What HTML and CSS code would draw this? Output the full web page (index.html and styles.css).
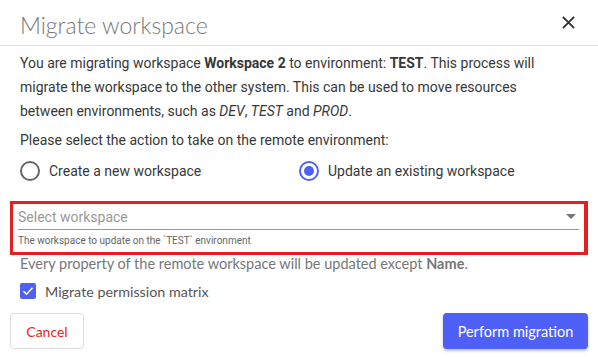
FILE: index.html
```html
<!DOCTYPE html>
<html lang="en">
<head>
  <meta charset="UTF-8">
  <title>Migrate workspace</title>
  <link rel="stylesheet" href="styles.css">
</head>
<body>

  <div class="dialog">
    <div class="dialog-header">
      <h2 class="dialog-title">Migrate workspace</h2>
      <svg class="close-icon" width="16" height="16" viewBox="0 0 16 16">
        <path d="M2 2 L14 14 M14 2 L2 14" stroke="#333" stroke-width="2" fill="none"/>
      </svg>
    </div>

    <div class="dialog-body">
      <p class="intro">You are migrating workspace <b>Workspace 2</b> to environment: <b>TEST</b>. This process will
        migrate the workspace to the other system. This can be used to move resources
        between environments, such as <i>DEV</i>, <i>TEST</i> and <i>PROD</i>.</p>

      <p class="question">Please select the action to take on the remote environment:</p>

      <div class="radio-row">
        <label class="radio">
          <span class="radio-circle"></span>
          Create a new workspace
        </label>
        <label class="radio">
          <span class="radio-circle checked"></span>
          Update an existing workspace
        </label>
      </div>

      <div class="select-box">
        <div class="select-field">
          <span class="placeholder">Select workspace</span>
          <span class="arrow"></span>
        </div>
        <div class="helper">The workspace to update on the `TEST` environment</div>
      </div>

      <p class="note">Every property of the remote workspace will be updated except <b>Name</b>.</p>

      <label class="check">
        <span class="check-box">
          <svg width="16" height="16" viewBox="0 0 16 16">
            <path d="M3.5 8.2 L6.6 11.2 L12.5 4.8" stroke="#fff" stroke-width="1.6" fill="none"/>
          </svg>
        </span>
        Migrate permission matrix
      </label>
    </div>

    <div class="dialog-footer">
      <button class="btn-cancel">Cancel</button>
      <button class="btn-primary">Perform migration</button>
    </div>
  </div>

</body>
</html>
```

FILE: styles.css
```css
html {
  font-family: 'Roboto', sans-serif;
}

body {
  margin: 0;
  background-color: #fff;
}

.dialog {
  width: 598px;
  height: 357px;
  color: #333;
}

.dialog-header {
  height: 45px;
  border-bottom: 1px solid #ddd;
  display: flex;
  align-items: center;
  justify-content: space-between;
  padding: 0 22px 0 20px;
}

.dialog-title {
  margin: 0;
  font-family: 'Lato', sans-serif;
  font-weight: 300;
  font-size: 23px;
  color: #777;
  padding-top: 4px;
}

.close-icon {
  width: 15px;
  height: 15px;
}

.dialog-body {
  padding: 0 20px;
}

.intro {
  margin: 5px 0 0;
  max-width: 540px;
  font-size: 14px;
  line-height: 24px;
  color: #383838;
}

.question {
  margin: 5px 0 0;
  font-size: 14px;
  line-height: 24px;
  color: #383838;
}

.radio-row {
  display: flex;
  margin-top: 7px;
  height: 24px;
}

.radio {
  display: flex;
  align-items: center;
  gap: 9px;
  font-size: 14px;
  color: #383838;
  width: 281px;
}

.radio-circle {
  width: 16px;
  height: 16px;
  border: 2px solid #666;
  border-radius: 50%;
  box-sizing: content-box;
  display: flex;
  align-items: center;
  justify-content: center;
}

.radio-circle.checked {
  border-color: #4f60f5;
}

.radio-circle.checked::after {
  content: "";
  width: 10px;
  height: 10px;
  border-radius: 50%;
  background: #4f60f5;
}

.select-box {
  margin: 18px -10px 0;
  border: 3px solid #e3201f;
  border-right-width: 4px;
  padding: 0 5px;
  height: 48px;
}

.select-field {
  display: flex;
  align-items: center;
  justify-content: space-between;
  height: 25px;
  border-bottom: 1px solid #999;
}

.placeholder {
  font-size: 14px;
  color: #999;
  padding-top: 1px;
}

.arrow {
  width: 0;
  height: 0;
  border-left: 5px solid transparent;
  border-right: 5px solid transparent;
  border-top: 5px solid #777;
  margin-right: 3px;
}

.helper {
  font-size: 10px;
  color: #666;
  padding-top: 5px;
}

.note {
  margin: 0;
  font-family: 'Lato', sans-serif;
  font-size: 14.5px;
  line-height: 18px;
  color: #777;
}

.check {
  display: flex;
  align-items: center;
  gap: 9px;
  margin-top: 8px;
  font-family: 'Lato', sans-serif;
  font-size: 14.3px;
  color: #555;
  height: 20px;
}

.check-box {
  width: 16px;
  height: 16px;
  background: #4f60f5;
  border-radius: 2px;
  display: flex;
}

.dialog-footer {
  display: flex;
  justify-content: space-between;
  padding: 0 10px;
  margin-top: 12px;
}

.btn-cancel {
  font-family: 'Lato', sans-serif;
  font-size: 14px;
  color: #f02020;
  background: #fff;
  border: 1px solid #ddd;
  border-radius: 4px;
  width: 74px;
  height: 36px;
}

.btn-primary {
  font-family: 'Lato', sans-serif;
  font-size: 14.5px;
  color: #fff;
  background: #4f60f8;
  border: none;
  border-radius: 4px;
  width: 145px;
  height: 36px;
  box-shadow: 0 2px 3px rgba(0, 0, 0, 0.25);
}
```
